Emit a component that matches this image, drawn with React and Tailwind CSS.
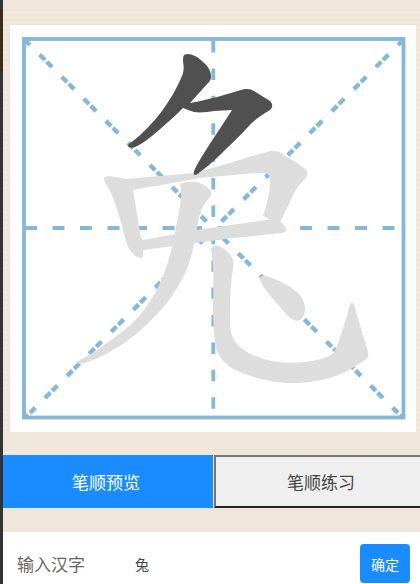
import React from 'react'

const font = 'font-["Noto_Sans_CJK_SC","Liberation_Sans",sans-serif]'

// 米字格 + 兔, drawn in page coordinates
function CharGrid() {
  return (
    <svg viewBox="22 37 384 384" className="block w-[384px] h-[384px]">
      <g fill="none" stroke="#85b7d9">
        <rect x="24" y="39" width="379.5" height="378.5" strokeWidth="3.8" />
        <g strokeWidth="3.8">
          <path d="M25 228H402" strokeDasharray="12 15.5" />
          <path d="M213.3 41V416" strokeDasharray="11.5 15.9" />
        </g>
        <g strokeWidth="4.4">
          <path d="M25 40L403 418" strokeDasharray="7.5 2.5 7.5 13.7" strokeDashoffset="10.5" />
          <path d="M403 40L25 418" strokeDasharray="7.5 2.5 7.5 13.7" strokeDashoffset="10.5" />
        </g>
      </g>
      <g fill="#dddddd">
        <path d="M104 178C107 175 112 176 127 179L193 173C215 168 245 158 267 152C275 149 281 152 287 157C295 162 303 166 307 171C308 175 307 177 304 180C298 186 294 192 290 202L279 224L263 216C267 204 271 190 270 178C270 174 266 172 257 173L200 178L133 190L141 238L143 240L143 254C143 258 142 259 140 258C133 256 128 249 126 241C122 225 116 205 112 195C109 187 104 184 104 178Z" />
        <path d="M143 240L203 229L267 220C273 219 278 219 281 222L286 228C287 231 286 232 282 233L233 238L143 250Z" />
        <path d="M180 184C186 181 192 181 197 182C203 184 208 187 211 191C212 194 211 196 209 198C205 203 202 207 200 213L192 253C188 268 183 279 177 288C170 300 163 308 157 314C146 326 136 335 124 343C112 351 98 359 87 362C82 364 78 364 76 362C86 357 97 351 107 343C120 333 131 326 140 315C148 305 155 295 160 283C166 270 170 256 173 243L180 206C181 198 182 192 180 184Z" />
        <path d="M211 249C213 245 216 245 219 246C226 249 231 254 233 260C234 264 233 268 232 276C230 288 230 305 230 322C230 333 233 340 238 345C245 352 256 358 272 361C285 364 304 363 317 360C325 358 331 356 334 352C339 344 345 322 350 305C351 302 353 302 354 305L368 352C369 356 368 358 365 360C355 367 344 373 333 377C320 381 305 383 293 383C280 383 268 381 257 378C246 375 237 371 230 367C223 362 218 355 216 348C214 335 213 322 213 310C213 295 214 280 213 270C213 262 212 256 211 249Z" />
        <path d="M260 279C260 276 263 275 266 276C273 278 280 281 287 285C294 289 299 293 302 298C305 304 306 310 304 315C302 320 298 322 294 320C291 319 289 317 287 315L268 293C264 288 261 284 260 279Z" />
      </g>
      <g fill="#505050">
        <path d="M184 55C187 53 191 54 195 56C202 60 208 66 210 71C212 77 211 80 208 83L190 103C208 100 228 94 241 90C247 88 251 89 254 91L270 101C273 104 273 107 270 110C262 115 254 120 248 127C240 136 230 145 223 152C215 160 206 168 200 172C197 175 194 176 194 174C193 172 195 169 198 163C205 151 213 139 221 127L232 110C226 110 220 111 214 111C208 112 200 113 194 112C190 111 186 109 183 108C176 115 167 123 158 131C150 138 142 144 135 147C132 148 129 148 128 146C128 144 130 143 133 141C142 134 152 124 162 111C170 100 177 88 182 76C184 71 184 66 183 62C183 59 183 57 184 55Z" />
      </g>
    </svg>
  )
}

export default function App() {
  return (
    <div className={`flex w-[420px] h-[584px] overflow-hidden bg-[#333336] ${font}`}>
      <div className="w-[3px] shrink-0 flex flex-col">
        <div className="h-[10px] bg-[#333336]" />
        <div className="h-[62px] bg-[#3a2d1a]" />
      </div>

      <div className="flex-1 min-w-0 flex flex-col bg-[#efe7db] bg-[repeating-linear-gradient(0deg,#f0e8dc_0px,#f0e8dc_3px,#eee5d8_3px,#eee5d8_5px)]">
        <div className="pt-[25px] pl-[7px]">
          <div className="w-[406px] h-[407px] bg-white pt-[12px] pl-[12px]">
            <CharGrid />
          </div>
        </div>

        <div className="flex mt-[23px] h-[53px] w-[425px] shrink-0">
          <button className="w-[210px] shrink-0 pr-[4px] bg-[#1a8cff] text-white text-[17px]">笔顺预览</button>
          <button className="w-[214px] ml-[1px] shrink-0 bg-[#efefef] text-[#444444] text-[17px] border-2 border-t-[#767676] border-l-[#767676] border-b-[#222222] border-r-[#222222]">
            笔顺练习
          </button>
        </div>

        <div className="mt-[24px] h-[52px] shrink-0 bg-white flex items-center pl-[14px] pt-[11px]">
          <span className="w-[118px] text-[17px] text-[#666666]">输入汉字</span>
          <input
            readOnly
            value="兔"
            className="flex-1 min-w-0 text-sm text-[#444444] outline-none bg-transparent"
          />
          <button className="w-[50px] h-[39px] mr-[10px] shrink-0 rounded bg-[#1a8cff] text-white text-sm">确定</button>
        </div>
      </div>
    </div>
  )
}
